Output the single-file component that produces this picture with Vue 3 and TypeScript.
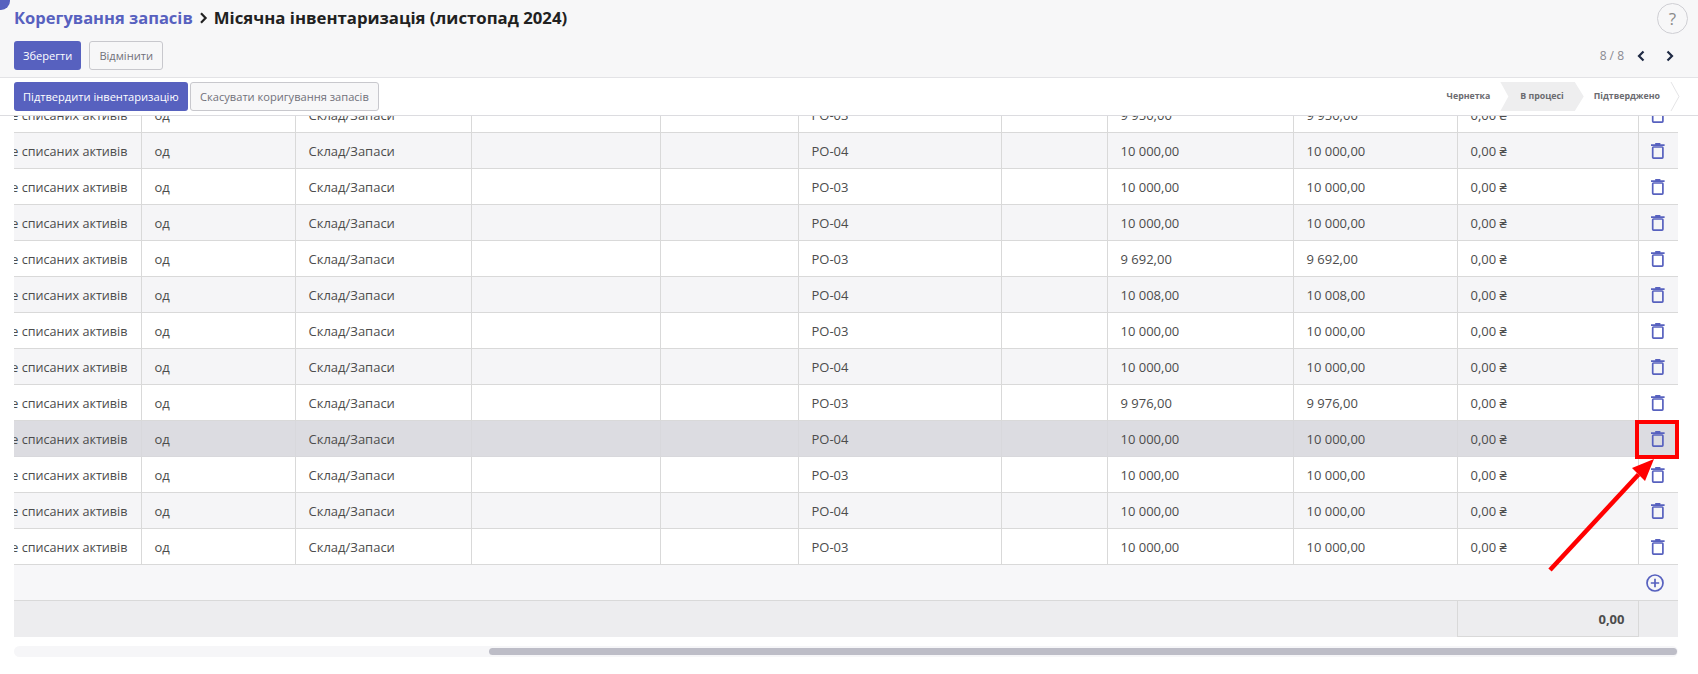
<script setup lang="ts">
interface Row {
  loc: string
  qty: string
  hl?: boolean
}
const q = '10 000,00'
const rows: Row[] = [
  { loc: 'PO-03', qty: '9 950,00' },
  { loc: 'PO-04', qty: q },
  { loc: 'PO-03', qty: q },
  { loc: 'PO-04', qty: q },
  { loc: 'PO-03', qty: '9 692,00' },
  { loc: 'PO-04', qty: '10 008,00' },
  { loc: 'PO-03', qty: q },
  { loc: 'PO-04', qty: q },
  { loc: 'PO-03', qty: '9 976,00' },
  { loc: 'PO-04', qty: q, hl: true },
  { loc: 'PO-03', qty: q },
  { loc: 'PO-04', qty: q },
  { loc: 'PO-03', qty: q },
]
</script>

<template>
  <div class="page">
    <span class="corner"></span>
    <header class="head">
      <div class="title-row">
        <h1 class="title">
          <a class="crumb">Корегування запасів</a>
          <svg class="sep" viewBox="0 0 9 12" width="9" height="12"><path d="M2 1.2 6.6 6 2 10.8" /></svg>
          <span>Місячна інвентаризація (листопад 2024)</span>
        </h1>
        <span class="help">?</span>
      </div>
      <div class="action-row">
        <div class="btns">
          <button class="btn primary">Зберегти</button>
          <button class="btn ghost cancel">Відмінити</button>
        </div>
        <div class="pager">
          <span class="count">8 / 8</span>
          <svg class="chev" viewBox="0 0 10 12" width="10" height="12"><path d="M7.5 1.5 3 6l4.5 4.5" /></svg>
          <svg class="chev" viewBox="0 0 10 12" width="10" height="12"><path d="M2.5 1.5 7 6l-4.5 4.5" /></svg>
        </div>
      </div>
    </header>

    <div class="status-bar">
      <div class="status-btns">
        <button class="btn primary">Підтвердити інвентаризацію</button>
        <button class="btn ghost second">Скасувати коригування запасів</button>
      </div>
      <div class="stages">
        <span class="stage">Чернетка</span>
        <span class="stage current">В процесі</span>
        <span class="stage">Підтверджено</span>
        <svg class="stage-end" viewBox="0 0 10 29" width="10" height="29"><path d="M1 0l8 14.5L1 29" /></svg>
      </div>
    </div>

    <main class="sheet">
      <div class="clip">
        <table class="grid">
          <colgroup>
            <col class="c1" /><col class="c2" /><col class="c3" /><col class="c4" /><col class="c5" />
            <col class="c6" /><col class="c7" /><col class="c8" /><col class="c9" /><col class="c10" /><col class="c11" />
          </colgroup>
          <tbody>
            <tr v-for="(r, i) in rows" :key="i" :class="{ odd: i % 2 === 1, hl: r.hl }">
              <td class="name"><span>Придбане списаних активів</span></td>
              <td>од</td>
              <td>Склад/Запаси</td>
              <td></td>
              <td></td>
              <td>{{ r.loc }}</td>
              <td></td>
              <td>{{ r.qty }}</td>
              <td>{{ r.qty }}</td>
              <td>0,00 ₴</td>
              <td class="act">
                <svg class="trash" viewBox="0 0 14 16" width="14" height="16">
                  <path d="M4.2 0h5.2v1.2h4.2v1.9H0V1.2h4.2z" class="fill" />
                  <rect x="1.7" y="4" width="10.2" height="11.1" rx="0.8" class="line" />
                </svg>
              </td>
            </tr>
            <tr class="add-row">
              <td colspan="10"></td>
              <td class="act plus">
                <svg viewBox="0 0 18 18" width="18" height="18">
                  <circle cx="9" cy="9" r="8" class="line" />
                  <path d="M9 4.8v8.4M4.8 9h8.4" class="line" />
                </svg>
              </td>
            </tr>
            <tr class="total-row">
              <td colspan="9"></td>
              <td class="sum">0,00</td>
              <td class="last"></td>
            </tr>
          </tbody>
        </table>
      </div>
      <div class="track"><div class="thumb"></div></div>
    </main>

    <div class="callout"></div>
    <svg class="arrow" viewBox="0 0 130 120" width="130" height="120">
      <path d="M4 118 92.5 22.5" stroke="#ff0000" stroke-width="4.5" fill="none" />
      <path d="M108 7 86 16 99 29z" fill="#ff0000" />
    </svg>
  </div>
</template>

<style>
html,
body {
  margin: 0;
  background: #fff;
}
</style>

<style scoped>
.page {
  position: relative;
  width: 1698px;
  height: 674px;
  overflow: hidden;
  display: flex;
  flex-direction: column;
  font-family: "Open Sans", "Noto Sans", sans-serif;
  font-size: 13px;
  color: #4c4c4c;
  background: #fff;
}
.corner {
  position: absolute;
  left: -8px;
  top: -8px;
  width: 18px;
  height: 18px;
  border-radius: 50%;
  background: #5761bf;
}
.head {
  height: 78px;
  box-sizing: border-box;
  background: #f7f7f8;
  border-bottom: 1px solid #e3e3e6;
  padding: 0 10px 0 14px;
}
.title-row {
  height: 41px;
  display: flex;
  justify-content: space-between;
  padding-top: 3px;
  box-sizing: border-box;
}
.title {
  margin: 0;
  display: flex;
  align-items: center;
  height: 30px;
  font-size: 16.75px;
  line-height: 30px;
  font-weight: 700;
  color: #212121;
}
.crumb {
  color: #5761bf;
  font-size: 16.5px;
}
.sep {
  margin: 0 6px 0 6px;
  fill: none;
  stroke: #212121;
  stroke-width: 2.2;
}
.help {
  width: 31px;
  height: 31px;
  box-sizing: border-box;
  border: 1px solid #cfcfd4;
  border-radius: 50%;
  display: flex;
  align-items: center;
  justify-content: center;
  font-size: 17px;
  color: #8a8a8a;
}
.action-row {
  display: flex;
  justify-content: space-between;
  align-items: center;
  height: 29px;
}
.btns {
  display: flex;
  gap: 8px;
}
.status-btns {
  display: flex;
  gap: 2px;
}
.btn {
  height: 29px;
  padding: 0 8px;
  border-radius: 3px;
  font-family: inherit;
  font-size: 11.1px;
  border: 1px solid transparent;
  box-sizing: border-box;
}
.cancel {
  padding: 0 9px;
}
.second {
  padding: 0 9.5px;
}
.primary {
  background: #5761bf;
  color: #fff;
}
.ghost {
  background: #f7f7f8;
  border-color: #c8c8cd;
  color: #71717a;
}
.pager {
  display: flex;
  align-items: center;
  gap: 14px;
  padding-right: 13px;
}
.count {
  color: #8a8a92;
  font-size: 12px;
  margin-right: -7px;
}
.chev {
  fill: none;
  stroke: #1f2a44;
  stroke-width: 2.2;
  margin-left: 5px;
}
.status-bar {
  height: 38px;
  box-sizing: border-box;
  border-bottom: 1px solid #dcdce0;
  padding: 4px 18px 0 14px;
  display: flex;
  justify-content: space-between;
  align-items: flex-start;
  background: #fff;
}
.stages {
  display: flex;
  align-items: center;
  height: 29px;
  font-size: 8.8px;
  font-weight: 700;
  color: #6b6b70;
}
.stage {
  padding: 0 10px;
  line-height: 29px;
}
.stage.current {
  background: #eeeeef;
  padding: 0 20px;
  clip-path: polygon(0 0, calc(100% - 9px) 0, 100% 50%, calc(100% - 9px) 100%, 0 100%, 8px 50%);
}
.stage-end {
  fill: none;
  stroke: #e4e4e6;
}
.sheet {
  flex: 1;
  padding-left: 14px;
  min-height: 0;
}
.clip {
  width: 1664px;
  height: 521px;
  overflow: hidden;
}
.grid {
  margin-top: -20px;
  table-layout: fixed;
  border-collapse: collapse;
  width: 1664px;
}
.c1 { width: 127px; }
.c2 { width: 154px; }
.c3 { width: 176px; }
.c4 { width: 189px; }
.c5 { width: 138px; }
.c6 { width: 203.5px; }
.c7 { width: 105.5px; }
.c8 { width: 186px; }
.c9 { width: 164px; }
.c10 { width: 181px; }
.c11 { width: 40px; }
tr {
  height: 36px;
}
td {
  border: 1px solid #d9d9d9;
  padding: 1px 13px 0;
  white-space: nowrap;
  overflow: hidden;
  height: 36px;
  box-sizing: border-box;
}
td:first-child {
  border-left: 0;
}
.odd td {
  background: #f5f5f7;
}
.hl td {
  background: #dcdce1;
  border-color: #d8d8dc;
}
.name {
  padding: 1px 0 0;
  font-size: 12.6px;
}
.name span {
  display: flex;
  justify-content: flex-end;
  padding-right: 13px;
}
.act {
  padding: 0;
  text-align: center;
  vertical-align: middle;
}
.act svg {
  display: block;
  margin: 0 auto;
}
.fill {
  fill: #5761bf;
}
.line {
  fill: none;
  stroke: #5761bf;
  stroke-width: 1.7;
}
.add-row td {
  background: #f7f7f9;
  border-left: 0;
  border-right: 0;
}
.add-row td:last-child {
  border-right: 1px solid #d9d9d9;
}
.plus svg {
  margin-left: 8px;
}
.total-row td {
  background: #ededef;
  border: 0;
  font-weight: 700;
}
.total-row .sum {
  text-align: right;
  padding-right: 13px;
  border: 1px solid #d9d9d9;
  border-top: 0;
}
.track {
  margin-top: 9px;
  width: 1664px;
  height: 11px;
  box-sizing: border-box;
  padding: 2px 1px 2px 475px;
  background: #f6f6f8;
  border-radius: 6px;
}
.thumb {
  height: 7px;
  border-radius: 4px;
  background: #bdbdc7;
}
.callout {
  position: absolute;
  left: 1635px;
  top: 420px;
  width: 44px;
  height: 39px;
  box-sizing: border-box;
  border: 4px solid #f00;
}
.arrow {
  position: absolute;
  left: 1546px;
  top: 452px;
}
</style>
